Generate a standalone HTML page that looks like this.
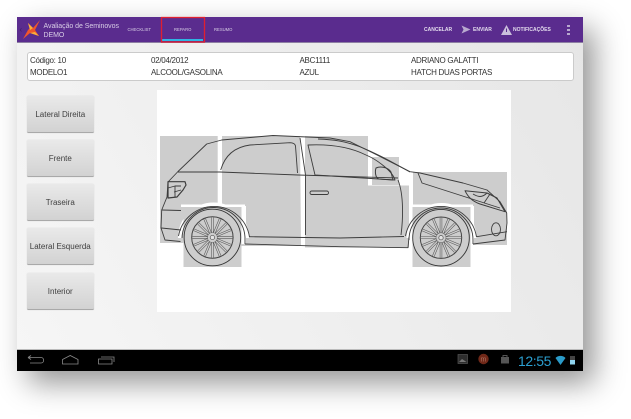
<!DOCTYPE html>
<html><head><meta charset="utf-8"><style>
html,body{margin:0;padding:0;background:#fff;width:631px;height:419px;overflow:hidden}
body{position:relative;font-family:"Liberation Sans",sans-serif}
#sh{position:absolute;left:17px;top:17px;width:566px;height:354px;box-shadow:11px 12px 28px rgba(0,0,0,.42)}
#s{position:absolute;left:17px;top:17px;width:566px;height:354px;background:linear-gradient(60deg,#f6f6f6 0%,#eeeeee 50%,#e6e6e6 100%);filter:blur(.3px);overflow:hidden}
.a{position:absolute;white-space:nowrap}
#bar{left:0;top:0;width:566px;height:24.5px;background:#5a2c8e;border-bottom:1px solid #8d7fa3}
.t{color:#d9cfe6;font-size:4.2px;top:10px}
.h{color:#e4dcee;font-size:5px;font-weight:bold;top:9.5px}
.i{font-size:8px;letter-spacing:-.28px;color:#333}
.b{left:10px;width:66.5px;height:36px;border-radius:1.5px;background:linear-gradient(#e9e9e9,#d2d2d2);border-bottom:1.5px solid #a9a9a9;color:#3f3f3f;font-size:8px;line-height:38px;text-align:center;box-shadow:0 0 1px #ccc}
</style></head><body>
<div id="sh"></div>
<div id="s">
<div class="a" id="bar"></div>
<div class="a" style="left:2.500px;top:8px;color:#3d1c66;font-size:8px">‹</div>
<svg class="a" style="left:6px;top:2px" width="18" height="21" viewBox="0 0 18 21"><path d="M5 4L10 9L17 1L12 11L16 17L7 14L0 20L5 11L7 9Z" fill="#f0562a"/><path d="M5 4L10 9L7 11ZM7 14L16 17L12 13Z" fill="#fbb03b"/></svg>
<div class="a" style="left:26.500px;top:4.500px;color:#d8cde6;font-size:7px;letter-spacing:-.05px;line-height:9.500px">Avaliação de Seminovos<br>DEMO</div>
<div class="a t" style="left:110.500px">CHECKLIST</div>
<div class="a t" style="left:157px">REPARO</div>
<div class="a t" style="left:197px">RESUMO</div>
<div class="a" style="left:145px;top:22px;width:41px;height:1.500px;background:#2fb5e4"></div>
<div class="a h" style="left:407px">CANCELAR</div>
<svg class="a" style="left:444px;top:7.500px" width="12" height="10"><path d="M0.500 .5L9.500 4.500L.5 8.500L2.500 4.500Z" fill="#b9a9cf"/></svg>
<div class="a h" style="left:456px">ENVIAR</div>
<svg class="a" style="left:484px;top:7.500px" width="11" height="10"><path d="M5.500 0L11 10H0Z" fill="#cbbfdc"/><rect x="5" y="3.500" width="1" height="3.500" fill="#5a2c8e"/></svg>
<div class="a h" style="left:496px">NOTIFICAÇÕES</div>
<div class="a" style="left:550px;top:7.500px;width:2.500px;height:2.500px;background:#b9a9cf;box-shadow:0 4px #b9a9cf,0 8px #b9a9cf"></div>
<div class="a" style="left:10px;top:35px;width:545px;height:27px;background:#fff;border:1px solid #cbcbcb;border-radius:3px"></div>
<div class="a i" style="left:13px;top:39px">Código: 10</div><div class="a i" style="left:134px;top:39px">02/04/2012</div><div class="a i" style="left:282.500px;top:39px">ABC1111</div><div class="a i" style="left:394px;top:39px">ADRIANO GALATTI</div>
<div class="a i" style="left:13px;top:50.700px">MODELO1</div><div class="a i" style="left:134px;top:50.700px">ALCOOL/GASOLINA</div><div class="a i" style="left:282.500px;top:50.700px">AZUL</div><div class="a i" style="left:394px;top:50.700px">HATCH DUAS PORTAS</div>
<div class="a b" style="top:78.500px">Lateral Direita</div>
<div class="a b" style="top:122.500px">Frente</div>
<div class="a b" style="top:166.500px">Traseira</div>
<div class="a b" style="top:211px">Lateral Esquerda</div>
<div class="a b" style="top:255.500px">Interior</div>
<svg class="a" style="left:140px;top:73px" width="354" height="222" viewBox="157 90 354 222">
<defs>
<g id="w">
<path fill="none" stroke="#555" stroke-width="2.400" d="M0 -20V20M-20 0H20M-14 -14L14 14M14 -14L-14 14M-7.700 -18.500L7.700 18.500M7.700 -18.500L-7.700 18.500M-18.500 -7.700L18.500 7.700M-18.500 7.700L18.500 -7.700"/>
<path fill="none" stroke="#cdcdcd" stroke-width="1.300" d="M0 -20V20M-20 0H20M-14 -14L14 14M14 -14L-14 14M-7.700 -18.500L7.700 18.500M7.700 -18.500L-7.700 18.500M-18.500 -7.700L18.500 7.700M-18.500 7.700L18.500 -7.700"/>
<circle r="5" fill="#cdcdcd" stroke="#666" stroke-width=".6"/>
<circle r="2.200" fill="#e4e4e4" stroke="#555" stroke-width=".7"/>
<circle r="20.700" fill="none" stroke="#444" stroke-width="1"/>
<circle r="28.300" fill="none" stroke="#333" stroke-width=".9"/>
</g>
</defs>
<rect x="157" y="90" width="354" height="222" fill="#fff"/>
<g fill="#cdcdcd">
<rect x="160" y="136" width="57.700" height="107"/>
<path d="M222 136H300L301 246H222Z"/>
<path d="M305 136H368V185.500H409V247.500H305Z"/>
<path d="M372 157H399V185H372Z"/>
<path d="M413 172H507V245H473V206H413Z"/>
</g>
<path d="M180 238A33.500 33.500 0 0 1 247 238" fill="none" stroke="#fff" stroke-width="4"/>
<path d="M408.500 238A33 33 0 0 1 474.500 238" fill="none" stroke="#fff" stroke-width="4"/>
<rect x="241" y="206" width="5" height="38" fill="#fff"/>
<rect x="470" y="206" width="4" height="38" fill="#fff"/>
<rect x="181" y="204.500" width="64" height="2.500" fill="#fff"/>
<rect x="413" y="204.500" width="60" height="2.500" fill="#fff"/>
<g fill="#cdcdcd">
<rect x="183.500" y="207" width="58" height="60"/>
<rect x="412.500" y="207" width="58" height="60"/>
</g>
<g fill="none" stroke="#3c3c3c" stroke-width=".9" stroke-linejoin="round">
<path d="M180.500 241.500L165 240L161 228L161.700 210L167 197L168 182L178 171.500L206.700 144L221.700 140L273 135.500L330 138L350 141.700L373 153L410 171.700L420 173L463 183L487 190L500 201.700L506.700 213L507 223L505 240L473 244"/>
<path d="M178.500 236A36 36 0 0 1 249.500 237"/>
<path d="M182 238A31.500 31.500 0 0 1 245 240V244"/>
<path d="M245 244L340 246.700L408 247.700L409 237"/>
<path d="M249 236.700L340 238L404 236.500"/>
<path d="M405.500 236A36 36 0 0 1 476.500 237"/>
<path d="M409 240A32 32 0 0 1 473 240V244"/>
<path d="M178 172L220 172L298 175L398 178"/>
<path d="M220.700 170C225 155 235 147 250 145L290 142.700C294 143 295 144 295.500 146L297.500 173"/>
<path d="M300 138L305.500 175L305.500 235"/>
<path d="M308 145L315 175L395 180C393 172 378 160 366 155C350 147 330 144 308 145Z"/>
<path d="M318 139C350 140 365 147 410 172"/>
<path d="M398 180C404 195 403 220 401 235"/>
<path d="M418 173L422 183L500 208"/>
<path d="M376 168C380 166 388 167 391 172L393 180L379 179C375 178 375 171 376 168Z" stroke-width="1"/>
<path d="M465 190.700C468 197 472 201 480 204L505 211.700L497 198L487 193Z" stroke-width="1"/>
<path d="M473 194C478 197 482 198 487 193M484 203L490 194"/>
<path d="M168 181.700L185 181.700L186 185L183 190L177 197L168 198Z" stroke-width="1.200"/>
<path d="M168 188L175 186V197M175 186H181M174 192L181 190"/>
<rect x="310" y="191" width="18.500" height="3.500" rx="1.700"/>
<path d="M162 210L181 210.500M161.500 228L181 230"/>
<ellipse cx="496" cy="229.300" rx="4.500" ry="6.500"/>
<path d="M476.700 236.700L507 231.700"/>
</g>
<use href="#w" x="212.400" y="237.500"/>
<use href="#w" x="441" y="237.700"/>
</svg>
<div class="a" style="left:0;top:332px;width:566px;height:22px;background:#000;border-top:.7px solid #bbb"></div>
<svg class="a" style="left:0;top:332px" width="566" height="22" fill="none" stroke="#8a8a8a" stroke-width=".8">
<path d="M12 8.500H24C27.500 8.500 27.500 14 24 14H13M11 8.500L14 6.500M11 8.500L14 10.500"/>
<path d="M45.500 15H61V10.500L53.200 6.500L45.500 10.500Z"/>
<path d="M81.500 15V10H95V15ZM84 8H97V13"/>
</svg>
<svg class="a" style="left:440px;top:335px" width="124" height="18">
<rect x="1" y="2.500" width="9.500" height="9" fill="#2e2e2e" stroke="#555" stroke-width=".7"/><path d="M2 10L5 7L9.500 10Z" fill="#777"/>
<circle cx="26.500" cy="7" r="5.200" fill="#702818"/>
<text x="23.500" y="9.300" font-size="7" fill="#a87060" font-family="Liberation Sans">m</text>
<path d="M44 5H52V11.500H44Z" fill="#555"/><path d="M46 5V3.500H50V5" fill="none" stroke="#555"/>
<path d="M98.500 6A7 7 0 0 1 108.500 6L103.500 13Z" fill="#2a9bc9"/>
<rect x="113" y="4" width="5" height="8.500" fill="#444"/><rect x="113" y="8" width="5" height="4.500" fill="#8fd3ee"/>
</svg>
<div class="a" style="left:501px;top:336px;color:#2b9fd0;font-size:14px;line-height:16px;letter-spacing:-.4px">12:55</div>
</div>
<svg class="a" style="left:160px;top:16px;z-index:9" width="46" height="28"><rect x="1.500" y="1.500" width="43" height="24.500" fill="none" stroke="#e01f30" stroke-width="1.300"/></svg>
</body></html>
